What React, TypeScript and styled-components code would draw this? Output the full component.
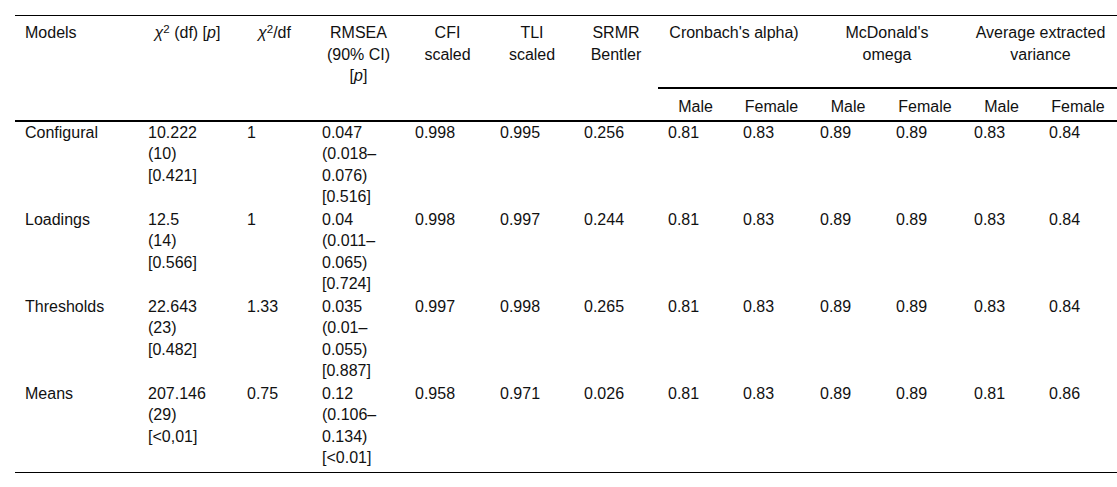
import React from "react";
import styled, { createGlobalStyle } from "styled-components";

const Global = createGlobalStyle`
  html, body { margin: 0; padding: 0; background: #fff; }
  body { font-family: "Liberation Sans", Arial, sans-serif; color: #111; }
`;

const Page = styled.div`
  padding: 15px 0 0 15px;
`;

const Table = styled.table`
  width: 1102px;
  table-layout: fixed;
  border-collapse: separate;
  border-spacing: 0;
  font-size: 16px;
  line-height: 21.5px;
`;

const HeadCell = styled.th<{ $left?: boolean; $sub?: boolean; $span?: boolean }>`
  font-weight: normal;
  text-align: ${(p) => (p.$left ? "left" : "center")};
  vertical-align: top;
  padding: ${(p) => (p.$sub ? "7px 10px 2px" : "6px 10px 0")};
  border-top: ${(p) => (p.$sub ? "2px solid #000" : "1px solid #000")};
  border-bottom: ${(p) => (p.$span ? "none" : "2px solid #000")};
  height: ${(p) => (p.$span ? "65px" : "auto")};
`;

const BodyRow = styled.tr<{ $last?: boolean }>`
  td {
    padding: 0 10px ${(p) => (p.$last ? "3px" : "1px")};
    border-bottom: ${(p) => (p.$last ? "1px solid #000" : "none")};
  }
`;

const Cell = styled.td`
  vertical-align: top;
  text-align: left;
`;

const Line = styled.span`
  display: block;
  white-space: nowrap;
`;

const Sup = styled.sup`
  font-size: 0.72em;
  line-height: 0;
  vertical-align: 0.45em;
`;

const widths = [123, 99, 75, 93, 85, 84, 84, 75, 77, 76, 78, 75, 78];

type Row = { name: string; chi: string[]; ratio: string; rmsea: string[]; rest: string[] };

const rows: Row[] = [
  {
    name: "Configural",
    chi: ["10.222", "(10)", "[0.421]"],
    ratio: "1",
    rmsea: ["0.047", "(0.018–", "0.076)", "[0.516]"],
    rest: ["0.998", "0.995", "0.256", "0.81", "0.83", "0.89", "0.89", "0.83", "0.84"],
  },
  {
    name: "Loadings",
    chi: ["12.5", "(14)", "[0.566]"],
    ratio: "1",
    rmsea: ["0.04", "(0.011–", "0.065)", "[0.724]"],
    rest: ["0.998", "0.997", "0.244", "0.81", "0.83", "0.89", "0.89", "0.83", "0.84"],
  },
  {
    name: "Thresholds",
    chi: ["22.643", "(23)", "[0.482]"],
    ratio: "1.33",
    rmsea: ["0.035", "(0.01–", "0.055)", "[0.887]"],
    rest: ["0.997", "0.998", "0.265", "0.81", "0.83", "0.89", "0.89", "0.83", "0.84"],
  },
  {
    name: "Means",
    chi: ["207.146", "(29)", "[<0,01]"],
    ratio: "0.75",
    rmsea: ["0.12", "(0.106–", "0.134)", "[<0.01]"],
    rest: ["0.958", "0.971", "0.026", "0.81", "0.83", "0.89", "0.89", "0.81", "0.86"],
  },
];

const Lines = ({ items }: { items: string[] }) => (
  <>
    {items.map((t, i) => (
      <Line key={i}>{t}</Line>
    ))}
  </>
);

export default function App() {
  return (
    <>
      <Global />
      <Page>
        <Table>
          <colgroup>
            {widths.map((w, i) => (
              <col key={i} style={{ width: w }} />
            ))}
          </colgroup>
          <thead>
            <tr>
              <HeadCell rowSpan={2} $left>Models</HeadCell>
              <HeadCell rowSpan={2}>
                <i>χ</i>
                <Sup>2</Sup> (df) [<i>p</i>]
              </HeadCell>
              <HeadCell rowSpan={2}>
                <i>χ</i>
                <Sup>2</Sup>/df
              </HeadCell>
              <HeadCell rowSpan={2}>
                <Line>RMSEA</Line>
                <Line>(90% CI)</Line>
                <Line>
                  [<i>p</i>]
                </Line>
              </HeadCell>
              <HeadCell rowSpan={2}>
                <Line>CFI</Line>
                <Line>scaled</Line>
              </HeadCell>
              <HeadCell rowSpan={2}>
                <Line>TLI</Line>
                <Line>scaled</Line>
              </HeadCell>
              <HeadCell rowSpan={2}>
                <Line>SRMR</Line>
                <Line>Bentler</Line>
              </HeadCell>
              <HeadCell colSpan={2} $span>Cronbach's alpha)</HeadCell>
              <HeadCell colSpan={2} $span>
                <Line>McDonald's</Line>
                <Line>omega</Line>
              </HeadCell>
              <HeadCell colSpan={2} $span>
                <Line>Average extracted</Line>
                <Line>variance</Line>
              </HeadCell>
            </tr>
            <tr>
              {["Male", "Female", "Male", "Female", "Male", "Female"].map((t, i) => (
                <HeadCell key={i} $sub>
                  {t}
                </HeadCell>
              ))}
            </tr>
          </thead>
          <tbody>
            {rows.map((r, ri) => (
              <BodyRow key={r.name} $last={ri === rows.length - 1}>
                <Cell>{r.name}</Cell>
                <Cell>
                  <Lines items={r.chi} />
                </Cell>
                <Cell>{r.ratio}</Cell>
                <Cell>
                  <Lines items={r.rmsea} />
                </Cell>
                {r.rest.map((v, i) => (
                  <Cell key={i}>{v}</Cell>
                ))}
              </BodyRow>
            ))}
          </tbody>
        </Table>
      </Page>
    </>
  );
}
